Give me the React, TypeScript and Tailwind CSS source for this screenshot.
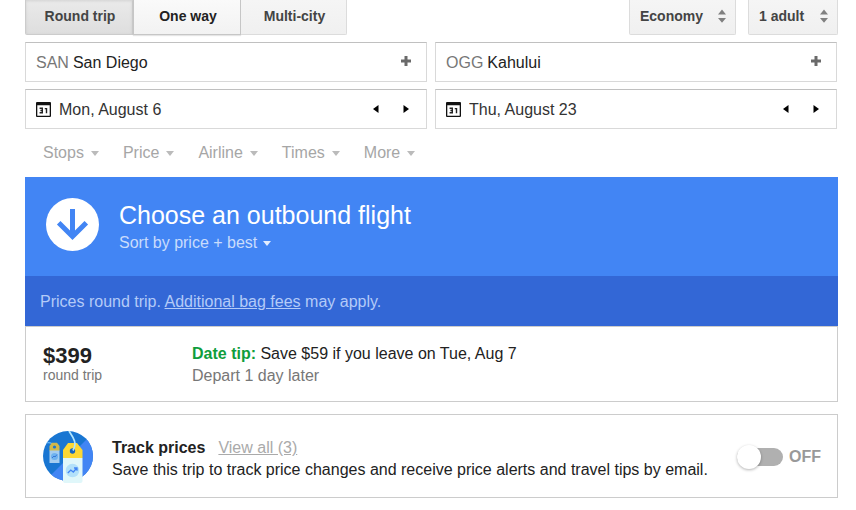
import React, { useState } from "react";

function CalendarIcon() {
  return (
    <svg width="15" height="15" viewBox="0 0 15 15" className="block shrink-0" aria-hidden="true">
      <path d="M1 0h13a1 1 0 0 1 1 1v13a1 1 0 0 1-1 1H1a1 1 0 0 1-1-1V1a1 1 0 0 1 1-1zM1.3 3.300v10.400h12.4V3.300z" fill="#111" fillRule="evenodd" />
      <path d="M3.6 6.300h2.700v4.400H3.600M4.400 8.500h2M8.800 6.600h1.700v4.700" fill="none" stroke="#222" strokeWidth="1.400" />
    </svg>
  );
}

function PlusIcon() {
  return (
    <svg width="10" height="10" viewBox="0 0 10 10" className="block" aria-hidden="true">
      <path d="M3.5 0h3v3.500H10v3H6.500V10h-3V6.500H0v-3h3.500z" fill="#6a6a6a" />
    </svg>
  );
}

function Caret() {
  return (
    <svg width="8" height="5" viewBox="0 0 8 5" className="block" fill="currentColor" aria-hidden="true">
      <path d="M0 0h8L4 5z" />
    </svg>
  );
}

function StepArrow({ back = false }: { back?: boolean }) {
  return (
    <svg width="6" height="8" viewBox="0 0 6 8" className="block" aria-hidden="true">
      <path d={back ? "M5.5 0v8L0 4z" : "M.5 0v8L6 4z"} fill="#000" />
    </svg>
  );
}

function PlaceField({ id, code, city, label }: { id: string; code: string; city: string; label: string }) {
  return (
    <div className="flex h-10 min-w-0 items-center border border-[#d9d9d9] border-t-[#c0c0c0] pr-[15px] pl-[10px]">
      <label htmlFor={id} className="mr-1 pt-[2px] text-[#777]">
        {code}
      </label>
      <input id={id} defaultValue={city} className="min-w-0 flex-1 bg-transparent pt-[2px] text-[#222] outline-none" />
      <button type="button" aria-label={label} className="pb-[2px]">
        <PlusIcon />
      </button>
    </div>
  );
}

function DateField({ id, date, label }: { id: string; date: string; label: string }) {
  return (
    <div className="flex h-10 min-w-0 items-center border border-[#d9d9d9] border-t-[#c0c0c0] pr-[17px] pl-[10px]">
      <label htmlFor={id} aria-label={label} className="mr-2">
        <CalendarIcon />
      </label>
      <input id={id} defaultValue={date} className="min-w-0 flex-1 bg-transparent pt-[2px] text-[#333] outline-none" />
      <div className="flex gap-6">
        <button type="button" aria-label="Previous day">
          <StepArrow back />
        </button>
        <button type="button" aria-label="Next day">
          <StepArrow />
        </button>
      </div>
    </div>
  );
}

function Picker({ label, options, width }: { label: string; options: string[]; width: string }) {
  return (
    <div
      className={`relative flex items-center rounded-b-[2px] border border-t-0 border-[#dcdcdc] bg-gradient-to-b from-[#f5f5f5] to-[#f0f0f0] ${width}`}
    >
      <select
        aria-label={label}
        className="h-full w-full appearance-none bg-transparent pb-[2px] pl-[10px] text-sm font-bold text-[#444] outline-none"
      >
        {options.map((option) => (
          <option key={option}>{option}</option>
        ))}
      </select>
      <svg
        width="8"
        height="14"
        viewBox="0 0 8 14"
        className="pointer-events-none absolute top-[9px] right-[9px]"
        aria-hidden="true"
      >
        <path d="M0 5.400h8L4 .6zM0 9h8l-4 4.800z" fill="#808080" />
      </svg>
    </div>
  );
}

function TagsIcon() {
  return (
    <svg width="50" height="52" viewBox="0 0 50 52" className="mt-[2px] block shrink-0" aria-hidden="true">
      <defs>
        <clipPath id="disc">
          <circle cx="25" cy="25" r="25" />
        </clipPath>
      </defs>
      <g clipPath="url(#disc)">
        <rect width="50" height="50" fill="#1976d2" />
        <path d="M50 2v48H2L45 7z" fill="#4285f4" />
        <path d="M2 12c4-1 8 0 9.500 4" fill="none" stroke="#64b5f6" strokeWidth="1.200" />
        <path d="M6.500 20v-5l2.500-3.300h5l2.500 3.300v5z" fill="#d3b84a" />
        <circle cx="11.500" cy="16" r="1.600" fill="#1976d2" />
        <path d="M6.500 19.500h10V32h-10z" fill="#a5cdf0" />
        <circle cx="11.500" cy="25.500" r="3.500" fill="#6fb3ef" />
        <path d="M9 27l2-2 1 1 2-2.500" fill="none" stroke="#3978d8" />
      </g>
      <path d="M20 27v-8l5-7h9l5.500 7v8z" fill="#fdd835" />
      <path d="M20 27h19.500v23a2 2 0 0 1-2 2H22a2 2 0 0 1-2-2z" fill="#e0f7fa" />
      <circle cx="29.500" cy="20" r="2.700" fill="#1565c0" />
      <path d="M26 0c3 5 9 11 4 19.500" fill="none" stroke="#b3e5fc" strokeWidth="1.700" />
      <circle cx="29.500" cy="39.500" r="6.800" fill="#b3e1fa" />
      <path d="M24.800 42l3-3 2.500 2 3.500-4M31 37h3v2.700" fill="none" stroke="#4285f4" strokeWidth="1.300" />
    </svg>
  );
}

const tabs = [
  {
    name: "Round trip",
    style: "w-[108px] rounded-bl-[2px] border-[#ccc] from-[#eaeaea] to-[#dedede] text-[#444] shadow-[inset_0_1px_3px_rgba(0,0,0,0.1)]",
  },
  { name: "One way", style: "w-[108px] border-[#c6c6c6] from-[#fafafa] to-[#f2f2f2] text-[#222] shadow-[0_1px_1px_rgba(0,0,0,0.1)]" },
  { name: "Multi-city", style: "w-[106px] rounded-br-[2px] border-l-0 border-[#dcdcdc] from-[#f5f5f5] to-[#f0f0f0] text-[#444]" },
];

const filters = ["Stops", "Price", "Airline", "Times", "More"];

export default function App() {
  const [tracking, setTracking] = useState(false);

  return (
    <main className="bg-white pr-[18px] pl-[25px] font-['Liberation_Sans',Arial,sans-serif] text-base leading-[22px] text-[#222]">
      <div className="flex h-[35px] items-stretch justify-between">
        <div className="flex">
          {tabs.map((tab) => (
            <button
              key={tab.name}
              type="button"
              className={`border border-t-0 bg-gradient-to-b pb-[2px] pl-[2px] text-sm font-bold ${tab.style}`}
            >
              {tab.name}
            </button>
          ))}
        </div>
        <div className="flex gap-3">
          <Picker label="Cabin class" options={["Economy", "Business", "First"]} width="w-[107px]" />
          <Picker label="Passengers" options={["1 adult", "2 adults"]} width="w-[90px]" />
        </div>
      </div>

      <div className="mt-[7px] grid grid-cols-2 gap-x-2 gap-y-[7px] pr-px">
        <PlaceField id="origin" code="SAN" city="San Diego" label="Add origin" />
        <PlaceField id="destination" code="OGG" city="Kahului" label="Add destination" />
        <DateField id="depart" date="Mon, August 6" label="Departure date" />
        <DateField id="return" date="Thu, August 23" label="Return date" />
      </div>

      <div className="flex h-12 items-center gap-6 pl-[18px] text-[#a6a6a6]">
        {filters.map((filter) => (
          <button key={filter} type="button" className="flex items-center gap-[7px]">
            {filter}
            <span className="text-[#bbb]">
              <Caret />
            </span>
          </button>
        ))}
      </div>

      <section>
        <header className="flex h-[99px] items-center gap-5 bg-[#4285f4] pl-[21px] text-white">
          <svg width="53" height="53" viewBox="0 0 53 53" className="mb-1 block shrink-0" aria-hidden="true">
            <circle cx="26.500" cy="26.500" r="26.500" fill="#fff" />
            <path d="M26.500 11v28M12.700 24.700l13.800 13.800 13.800-13.800" fill="none" stroke="#4285f4" strokeWidth="5" />
          </svg>
          <div>
            <h1 className="text-[25px] leading-8">Choose an outbound flight</h1>
            <button type="button" className="flex items-center gap-[6px] pt-px text-[#c9dcfc]">
              Sort by price + best
              <span className="text-[#e3edfe]">
                <Caret />
              </span>
            </button>
          </div>
        </header>
        <p className="flex h-[50px] items-center bg-[#3367d6] pt-[2px] pl-[15px] text-[#b4cbf8]">
          <span>
            Prices round trip.{" "}
            <a href="#bag-fees" className="underline">
              Additional bag fees
            </a>{" "}
            may apply.
          </span>
        </p>
        <div className="flex h-[76px] border border-[#ccc] pt-4 pl-[17px]">
          <div className="w-[149px]">
            <p className="pt-[2px] text-[22px] leading-[22px] font-bold">$399</p>
            <p className="text-sm leading-4 text-[#777]">round trip</p>
          </div>
          <div>
            <p>
              <strong className="text-[#0f9d3c]">Date tip:</strong> Save $59 if you leave on Tue, Aug 7
            </p>
            <p className="text-[#777]">Depart 1 day later</p>
          </div>
        </div>
      </section>

      <section className="mt-3 flex h-[84px] items-center border border-[#ccc] pr-4 pl-[17px]">
        <TagsIcon />
        <div className="ml-[19px] flex-1 pt-[6px]">
          <div className="flex gap-[13px]">
            <h2 className="font-bold">Track prices</h2>
            <a href="#tracked" className="text-[#aaa] underline">
              View all (3)
            </a>
          </div>
          <p className="whitespace-nowrap">
            Save this trip to track price changes and receive price alerts and travel tips by email.
          </p>
        </div>
        <label className="flex cursor-pointer items-center gap-[6px] pt-px font-bold text-[#999]">
          <input
            type="checkbox"
            role="switch"
            aria-label="Track prices"
            checked={tracking}
            onChange={(event) => setTracking(event.target.checked)}
            className="h-[18px] w-[46px] appearance-none rounded-full bg-[#b0b0b0] before:-mt-[3px] before:block before:size-6 before:rounded-full before:bg-white before:shadow-[0_1px_3px_rgba(0,0,0,0.3)] checked:bg-[#4285f4] checked:before:ml-[22px]"
          />
          {tracking ? "ON" : "OFF"}
        </label>
      </section>
    </main>
  );
}
